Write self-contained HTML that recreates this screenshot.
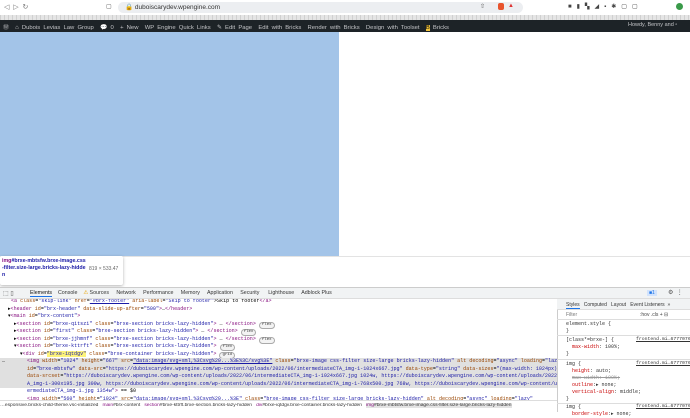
<!DOCTYPE html>
<html><head><meta charset="utf-8"><style>
*{margin:0;padding:0;box-sizing:border-box}
body{width:690px;height:412px;overflow:hidden;background:#fff;font-family:"Liberation Sans",sans-serif;position:relative}
.abs{position:absolute}
.mono{font-family:"Liberation Mono",monospace;font-size:5.05px;white-space:nowrap}
.tag{color:#881280}.at{color:#994500}.av{color:#1a1aa6}.ln{color:#1a1aa6;text-decoration:underline}
.row{position:absolute;left:0;height:7.5px;line-height:7.5px}
.pill{display:inline-block;border:0.5px solid #aaa;border-radius:4px;padding:0 2px;font-size:4px;line-height:5px;color:#333;background:#f3f3f3}
</style></head><body>
<div class="abs" style="left:0;top:0;width:690px;height:15px;background:#fff"></div>
<div class="abs" style="left:4px;top:3px;font-size:7px;color:#777">◁ &nbsp;▷ &nbsp;↻</div>
<div class="abs" style="left:118px;top:2px;width:405px;height:11px;background:#eceef1;border-radius:6px"></div>
<div class="abs" style="left:106px;top:3px;font-size:6px;color:#555">▢</div>
<div class="abs" style="left:125px;top:3px;font-size:6.5px;color:#333">🔒 duboiscarydev.wpengine.com</div>
<div class="abs" style="left:480px;top:3px;font-size:6px;color:#555">⇧</div>
<div class="abs" style="left:498px;top:3px;width:6px;height:7px;background:#e8542d;border-radius:2px"></div>
<div class="abs" style="left:508px;top:3px;font-size:6px;color:#d33">▲</div>
<div class="abs" style="left:568px;top:3px;font-size:6px;color:#444;letter-spacing:5px">■▮▚◢▪✱▢▢</div>
<div class="abs" style="left:676px;top:3px;width:7px;height:7px;background:#3a9a4a;border-radius:50%"></div>
<div class="abs" style="left:0;top:15px;width:690px;height:5px;background:repeating-linear-gradient(90deg,#bbb 0 0.5px,#e5e5e5 0.5px 4px);"></div>
<div class="abs" style="left:0;top:20px;width:690px;height:12px;background:#1d2327"></div>
<div class="abs" style="left:3px;top:21.5px;font-size:5.9px;color:#c3c4c7;white-space:nowrap;word-spacing:1.5px">Ⓦ &nbsp;⌂ Dubois Levias Law Group &nbsp;💬 0 &nbsp;+ New &nbsp;WP Engine Quick Links &nbsp;✎ Edit Page &nbsp;Edit with Bricks &nbsp;Render with Bricks &nbsp;Design with Toolset &nbsp;<span style="background:#f0c33c;color:#000">B</span> Bricks</div>
<div class="abs" style="left:628px;top:21.5px;font-size:5.5px;color:#c3c4c7">Howdy, Benny and ▫</div>
<div class="abs" style="left:0;top:32px;width:339px;height:224px;background:#a3c4e8"></div>
<div class="abs" style="left:0;top:255.5px;width:690px;height:1px;background:#e3e3e3"></div>
<div class="abs" style="left:0;top:256px;width:123px;height:29px;background:#fff;box-shadow:0 1px 3px rgba(0,0,0,.3);border-radius:2px"></div>
<div class="abs" style="left:2px;top:258px;font-size:5.3px;line-height:7px;font-weight:bold;color:#881280;width:84px;word-break:break-all">img<span style="color:#1a1aa6">#brxe-mbtsfw.brxe-image.css-filter.size-large.bricks-lazy-hidden</span></div>
<div class="abs" style="left:89px;top:266px;font-size:5px;color:#666">819 × 533.47</div>
<div class="abs" style="left:0;top:287px;width:690px;height:125px;background:#fff;border-top:1px solid #ccc"></div>
<div class="abs" style="left:0;top:288px;width:690px;height:11px;background:#f1f3f4;border-bottom:1px solid #ddd"></div>
<div class="abs" style="left:3px;top:289.5px;font-size:6px;color:#555">⬚ ▯</div>
<div class="abs" style="left:30px;top:290px;font-size:5.3px;color:#333;white-space:nowrap;word-spacing:0"><span style="border-bottom:1.5px solid #1a73e8;color:#111">Elements</span>&nbsp;&nbsp;&nbsp; Console &nbsp;&nbsp;&nbsp;<span style="color:#e8a300">⚠</span> Sources &nbsp;&nbsp;&nbsp; Network &nbsp;&nbsp;&nbsp; Performance &nbsp;&nbsp;&nbsp; Memory &nbsp;&nbsp;&nbsp; Application &nbsp;&nbsp;&nbsp; Security &nbsp;&nbsp;&nbsp;&nbsp; Lighthouse &nbsp;&nbsp;&nbsp; Adblock Plus</div>
<div class="abs" style="left:647px;top:290px;font-size:5px;color:#1a73e8;background:#d2e3fc;padding:0 2px">■1</div>
<div class="abs" style="left:668px;top:289px;font-size:6px;color:#555">⚙ &nbsp;⋮</div>
<div class="abs mono" style="left:0;top:299px;width:557px;height:101px;overflow:hidden">
<div class="row" style="top:-1px;left:11px"><span class="tag">&lt;a</span> <span class="at">class</span>=<span class="av">"skip-link"</span> <span class="at">href</span>=<span class="ln">"#brx-footer"</span> <span class="at">aria-label</span>=<span class="av">"Skip to footer"</span>&gt;Skip to footer<span class="tag">&lt;/a&gt;</span></div>
<div class="row" style="top:6.5px;left:8px">▸<span class="tag">&lt;header</span> <span class="at">id</span>=<span class="av">"brx-header"</span> <span class="at">data-slide-up-after</span>=<span class="av">"500"</span><span class="tag">&gt;</span>…<span class="tag">&lt;/header&gt;</span></div>
<div class="row" style="top:14px;left:8px">▾<span class="tag">&lt;main</span> <span class="at">id</span>=<span class="av">"brx-content"</span><span class="tag">&gt;</span></div>
<div class="row" style="top:21.5px;left:14px">▸<span class="tag">&lt;section</span> <span class="at">id</span>=<span class="av">"brxe-qitszi"</span> <span class="at">class</span>=<span class="av">"brxe-section bricks-lazy-hidden"</span><span class="tag">&gt;</span> … <span class="tag">&lt;/section&gt;</span> <span class="pill">flex</span></div>
<div class="row" style="top:29px;left:14px">▸<span class="tag">&lt;section</span> <span class="at">id</span>=<span class="av">"first"</span> <span class="at">class</span>=<span class="av">"brxe-section bricks-lazy-hidden"</span><span class="tag">&gt;</span> … <span class="tag">&lt;/section&gt;</span> <span class="pill">flex</span></div>
<div class="row" style="top:36.5px;left:14px">▸<span class="tag">&lt;section</span> <span class="at">id</span>=<span class="av">"brxe-jjhmnf"</span> <span class="at">class</span>=<span class="av">"brxe-section bricks-lazy-hidden"</span><span class="tag">&gt;</span> … <span class="tag">&lt;/section&gt;</span> <span class="pill">flex</span></div>
<div class="row" style="top:44px;left:14px">▾<span class="tag">&lt;section</span> <span class="at">id</span>=<span class="av">"brxe-kttrft"</span> <span class="at">class</span>=<span class="av">"brxe-section bricks-lazy-hidden"</span><span class="tag">&gt;</span> <span class="pill">flex</span></div>
<div class="row" style="top:51.5px;left:20px">▾<span class="tag">&lt;div</span> <span class="at">id</span>=<span class="av" style="background:#fdf37a">"brxe-iqtdgv"</span> <span class="at">class</span>=<span class="av">"brxe-container bricks-lazy-hidden"</span><span class="tag">&gt;</span> <span class="pill">grid</span></div>
<div style="position:absolute;left:0;top:59px;width:557px;height:30px;background:#e0e0e0"></div>
<div class="row" style="top:59px;left:2px">…</div>
<div class="row" style="top:59px;left:27px"><span class="tag">&lt;img</span> <span class="at">width</span>=<span class="av">"1024"</span> <span class="at">height</span>=<span class="av">"667"</span> <span class="at">src</span>=<span class="ln">"data:image/svg+xml,%3Csvg%20...%3E%3C/svg%3E"</span> <span class="at">class</span>=<span class="av">"brxe-image css-filter size-large bricks-lazy-hidden"</span> <span class="at">alt</span> <span class="at">decoding</span>=<span class="av">"async"</span> <span class="at">loading</span>=<span class="av">"lazy"</span></div>
<div class="row" style="top:66.5px;left:27px"><span class="at">id</span>=<span class="av">"brxe-mbtsfw"</span> <span class="at">data-src</span>=<span class="av">"https://duboiscarydev.wpengine.com/wp-content/uploads/2022/06/intermediateCTA_img-1-1024x667.jpg"</span> <span class="at">data-type</span>=<span class="av">"string"</span> <span class="at">data-sizes</span>=<span class="av">"(max-width: 1024px) 100vw, 1024px"</span></div>
<div class="row" style="top:74px;left:27px"><span class="at">data-srcset</span>=<span class="av">"https://duboiscarydev.wpengine.com/wp-content/uploads/2022/06/intermediateCTA_img-1-1024x667.jpg 1024w, https://duboiscarydev.wpengine.com/wp-content/uploads/2022/06/intermediateCT</span></div>
<div class="row" style="top:81.5px;left:27px"><span class="av">A_img-1-300x195.jpg 300w, https://duboiscarydev.wpengine.com/wp-content/uploads/2022/06/intermediateCTA_img-1-768x500.jpg 768w, https://duboiscarydev.wpengine.com/wp-content/uploads/2022/06/in</span></div>
<div class="row" style="top:89px;left:27px"><span class="av">ermediateCTA_img-1.jpg 1354w"</span><span class="tag">&gt;</span> == $0</div>
<div class="row" style="top:96.5px;left:27px"><span class="tag">&lt;img</span> <span class="at">width</span>=<span class="av">"560"</span> <span class="at">height</span>=<span class="av">"1024"</span> <span class="at">src</span>=<span class="ln">"data:image/svg+xml,%3Csvg%20...%3E"</span> <span class="at">class</span>=<span class="av">"brxe-image css-filter size-large bricks-lazy-hidden"</span> <span class="at">alt</span> <span class="at">decoding</span>=<span class="av">"async"</span> <span class="at">loading</span>=<span class="av">"lazy"</span></div>
</div>
<div class="abs" style="left:0;top:400px;width:557px;height:12px;background:#fff;border-top:1px solid #ddd"></div>
<div class="abs" style="left:0;top:402.5px;width:557px;overflow:hidden;font-size:4.9px;color:#333;white-space:nowrap">…esponsive.bricks-child-theme.vsc-initialized &nbsp;&nbsp;<span class="tag">main</span>#brx-content &nbsp;&nbsp;<span class="tag">section</span>#brxe-kttrft.brxe-section.bricks-lazy-hidden &nbsp;&nbsp;<span class="tag">div</span>#brxe-iqtdgv.brxe-container.bricks-lazy-hidden &nbsp;&nbsp;<span style="background:#e3e3e3"><span class="tag">img</span>#brxe-mbtsfw.brxe-image.css-filter.size-large.bricks-lazy-hidden</span></div>
<div class="abs" style="left:557px;top:299px;width:133px;height:113px;background:#fff;border-left:1px solid #ccc"></div>
<div class="abs" style="left:557px;top:299px;width:133px;height:11px;background:#f1f3f4;border-bottom:1px solid #ddd"></div>
<div class="abs" style="left:566px;top:301.5px;font-size:5px;color:#333;white-space:nowrap"><span style="border-bottom:1.5px solid #1a73e8">Styles</span> &nbsp;&nbsp;Computed &nbsp;&nbsp;Layout &nbsp;&nbsp;Event Listeners &nbsp;»</div>
<div class="abs" style="left:566px;top:312px;font-size:5px;color:#777">Filter</div>
<div class="abs" style="left:640px;top:312px;font-size:5px;color:#444;white-space:nowrap">:hov .cls + ⊟</div>
<div class="abs" style="left:557px;top:319px;width:133px;height:1px;background:#ddd"></div>
<div class="abs mono" style="left:566px;top:321px;line-height:7px;font-size:5px;color:#333">element.style {<br>}<br></div>
<div class="abs" style="left:557px;top:335px;width:133px;height:1px;background:#ddd"></div>
<div class="abs mono" style="left:566px;top:337px;line-height:7px;font-size:5px;color:#333">[class*=brxe-] {<br>&nbsp;&nbsp;<span style="color:#c80000">max-width</span>: 100%;<br>}</div>
<div class="abs" style="left:557px;top:359px;width:133px;height:1px;background:#ddd"></div>
<div class="abs mono" style="left:566px;top:361px;line-height:7px;font-size:5px;color:#333">img {<br>&nbsp;&nbsp;<span style="color:#c80000">height</span>: auto;<br>&nbsp;&nbsp;<s style="color:#999">max-width: 100%;</s><br>&nbsp;&nbsp;<span style="color:#c80000">outline</span>:▸ none;<br>&nbsp;&nbsp;<span style="color:#c80000">vertical-align</span>: middle;<br>}</div>
<div class="abs" style="left:557px;top:403px;width:133px;height:1px;background:#ddd"></div>
<div class="abs mono" style="left:566px;top:404px;line-height:7px;font-size:5px;color:#333">img {<br>&nbsp;&nbsp;<span style="color:#c80000">border-style</span>:▸ none;</div>
<div class="abs mono" style="left:636px;top:337px;font-size:4.8px;color:#333;text-decoration:underline">frontend.mi…67770768</div>
<div class="abs mono" style="left:636px;top:361px;font-size:4.8px;color:#333;text-decoration:underline">frontend.mi…67770768</div>
<div class="abs mono" style="left:636px;top:404px;font-size:4.8px;color:#333;text-decoration:underline">frontend.mi…67770768</div>
</body></html>
